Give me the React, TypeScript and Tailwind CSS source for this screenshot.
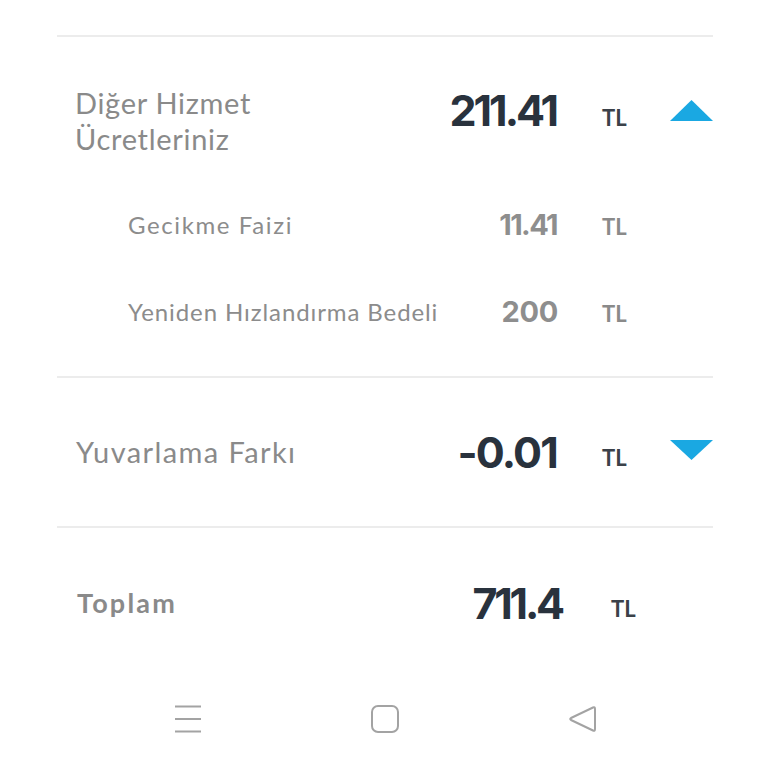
import React from "react";

const font = { fontFamily: "Lato, 'Noto Sans', sans-serif" };
const numFont = { fontFamily: "Inter, Lato, sans-serif" };

function TriUp() {
  return (
    <svg width="43" height="21" viewBox="0 0 43 21">
      <path d="M21.5 0 L43 21 L0 21 Z" fill="#1aa8e2" />
    </svg>
  );
}
function TriDown() {
  return (
    <svg width="43" height="20" viewBox="0 0 43 20">
      <path d="M0 0 L43 0 L21.5 20 Z" fill="#1aa8e2" />
    </svg>
  );
}

function Divider() {
  return <div className="h-[2px] bg-[#ececec] ml-[57px] mr-[55px]" />;
}

export default function App() {
  return (
    <div className="w-[768px] h-[768px] bg-white overflow-hidden" style={font}>
      <div className="h-[35px]" />
      <Divider />
      {/* Diğer Hizmet section */}
      <div className="pl-[57px] pr-[55px]">
        <div className="flex items-start pt-[48px]">
          <div className="flex-1 pl-[18px] text-[29px] leading-[36px] tracking-[0.7px] text-[#8a8a8a]">
            Diğer Hizmet
            <br />
            Ücretleriniz
          </div>
          <div className="text-[43px] leading-[50px] font-bold text-[#29323d] tracking-[-3px] pr-[2px] text-right" style={numFont}>211.41</div>
          <div className="w-[30px] ml-[44px] pt-[20px] text-[22px] leading-[26px] font-bold text-[#3b4149]">TL</div>
          <div className="w-[81px] flex justify-end pt-[15px]">
            <TriUp />
          </div>
        </div>
        <div className="h-[24px]" />
        <div className="flex items-center h-[87px]">
          <div className="flex-1 pl-[71px] text-[24px] tracking-[1.6px] text-[#8c8c8c]">Gecikme Faizi</div>
          <div className="text-[29px] font-bold text-[#8e8e8e] tracking-[-1.6px] pr-[1px] text-right" style={numFont}>11.41</div>
          <div className="w-[30px] ml-[44px] pt-[4px] text-[22px] font-bold text-[#8a8a8a]">TL</div>
          <div className="w-[81px]" />
        </div>
        <div className="flex items-center h-[87px]">
          <div className="flex-1 pl-[71px] text-[24px] tracking-[0.9px] text-[#8c8c8c]">Yeniden Hızlandırma Bedeli</div>
          <div className="text-[29px] font-bold text-[#8e8e8e] tracking-[-0.3px] text-right" style={numFont}>200</div>
          <div className="w-[30px] ml-[44px] pt-[4px] text-[22px] font-bold text-[#8a8a8a]">TL</div>
          <div className="w-[81px]" />
        </div>
        <div className="h-[21px]" />
      </div>
      <Divider />
      {/* Yuvarlama */}
      <div className="pl-[57px] pr-[55px] flex items-center h-[148px]">
        <div className="flex-1 pl-[19px] text-[29px] tracking-[1.4px] text-[#8a8a8a]">Yuvarlama Farkı</div>
        <div className="text-[43px] font-bold text-[#29323d] tracking-[-1.8px] pr-[1px] text-right" style={numFont}>-0.01</div>
        <div className="w-[30px] ml-[44px] pt-[10px] text-[22px] font-bold text-[#3b4149]">TL</div>
        <div className="w-[81px] flex justify-end pb-[4px]">
          <TriDown />
        </div>
      </div>
      <Divider />
      {/* Toplam */}
      <div className="pl-[57px] pr-[55px] flex items-center h-[150px]">
        <div className="flex-1 pl-[20px] text-[27px] font-bold tracking-[2.2px] text-[#8a8a8a]">Toplam</div>
        <div className="text-[43px] font-bold text-[#29323d] tracking-[-3.2px] pr-[2px] text-right" style={numFont}>711.4</div>
        <div className="w-[30px] ml-[47px] pt-[10px] text-[22px] font-bold text-[#3b4149]">TL</div>
        <div className="w-[72px]" />
      </div>
      {/* Nav bar */}
      <div className="flex items-center h-[82px] pl-[89px]">
        <div className="w-[197px] flex justify-center">
          <svg width="28" height="28" viewBox="0 0 28 28">
            <path d="M1 1.5 H27 M1 14 H27 M1 26.5 H27" stroke="#a3a3a3" strokeWidth="2" />
          </svg>
        </div>
        <div className="w-[197px] flex justify-center">
          <svg width="28" height="28" viewBox="0 0 28 28">
            <rect x="1" y="1" width="26" height="26" rx="6" fill="none" stroke="#a3a3a3" strokeWidth="2" />
          </svg>
        </div>
        <div className="w-[197px] flex justify-center">
          <svg width="28" height="28" viewBox="0 0 28 28">
            <path d="M25 2.5 Q27 1.5 27 4 V24 Q27 26.5 25 25.5 L3 15 Q1.5 14 3 13 Z" fill="none" stroke="#a3a3a3" strokeWidth="2" strokeLinejoin="round" />
          </svg>
        </div>
      </div>
    </div>
  );
}
